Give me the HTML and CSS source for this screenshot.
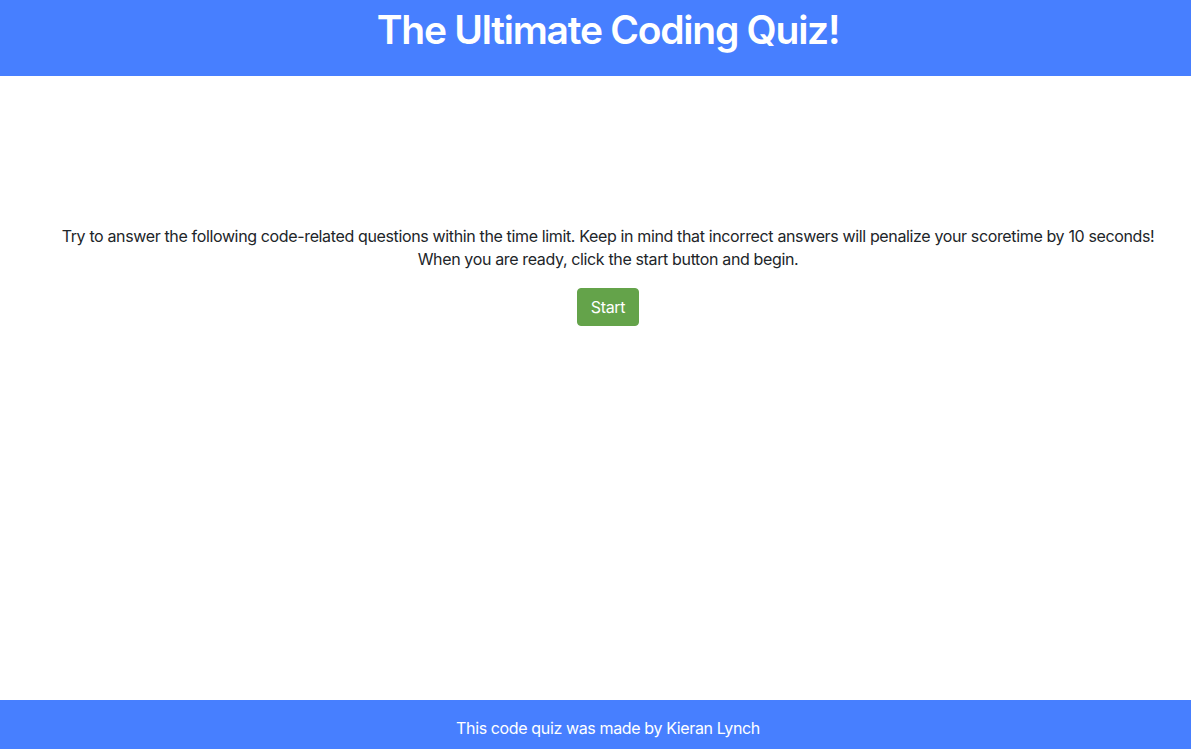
FILE: index.html
```html
<!DOCTYPE html>
<html lang="en">
<head>
<meta charset="utf-8">
<title>The Ultimate Coding Quiz!</title>
<link rel="stylesheet" href="styles.css">
</head>
<body>
<header class="site-header">
  <h1 class="title">The Ultimate Coding Quiz!</h1>
</header>
<main class="content">
  <p class="intro">Try to answer the following code-related questions within the time limit. Keep in mind that incorrect answers will penalize your scoretime by 10 seconds!<br>When you are ready, click the start button and begin.</p>
  <button class="start-btn" type="button">Start</button>
</main>
<footer class="site-footer">This code quiz was made by Kieran Lynch</footer>
</body>
</html>
```

FILE: styles.css
```css
* { box-sizing: border-box; }
html, body { height: 100%; }
body {
  margin: 0;
  font-family: Inter, "Noto Sans", "Liberation Sans", sans-serif;
  color: #212529;
  background: #fff;
  display: flex;
  flex-direction: column;
  font-size: 16px;
  line-height: 1.5;
}
.site-header {
  background: #477fff;
  height: 76px;
  display: flex;
  justify-content: center;
  padding: 6px 0 0 25px;
}
.title {
  margin: 0;
  color: #fff;
  font-size: 39px;
  font-weight: 600;
  line-height: 48px;
  letter-spacing: -1.25px;
}
.content {
  flex: 1;
  display: flex;
  flex-direction: column;
  align-items: center;
  padding: 149px 0 0 25px;
}
.intro {
  margin: 0 0 17px;
  text-align: center;
  font-size: 16px;
  line-height: 23px;
  letter-spacing: -0.36px;
}
.start-btn {
  font-family: inherit;
  font-size: 16px;
  line-height: 24px;
  letter-spacing: -0.3px;
  color: #fff;
  background: #64a34a;
  border: 1px solid #64a34a;
  border-radius: 4px;
  padding: 6px 12px;
  width: 62px;
  height: 38px;
  cursor: pointer;
}
.site-footer {
  background: #477fff;
  height: 49px;
  color: #fff;
  display: flex;
  align-items: center;
  justify-content: center;
  font-size: 16px;
  letter-spacing: -0.37px;
  padding: 6px 0 0 25px;
}
```
